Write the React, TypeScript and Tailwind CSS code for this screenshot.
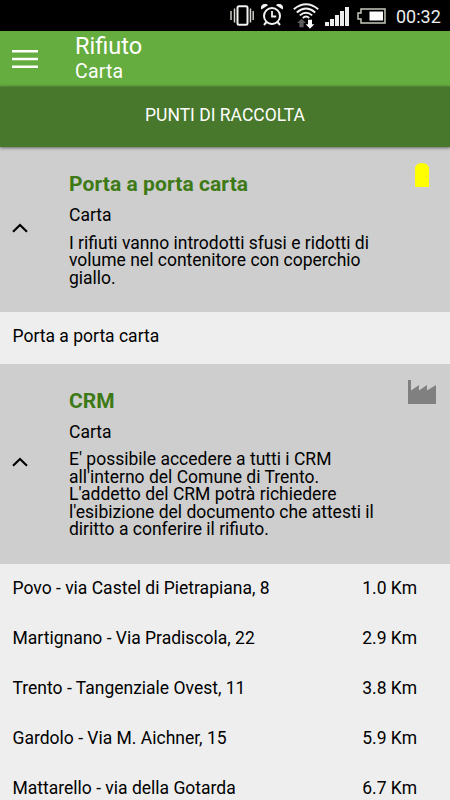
import React from 'react';

interface Place {
  name: string;
  distance?: string;
}

interface Group {
  title: string;
  subtitle: string;
  lines: string[];
  icon: 'bin' | 'factory';
  places: Place[];
}

const groups: Group[] = [
  {
    title: 'Porta a porta carta',
    subtitle: 'Carta',
    lines: ['I rifiuti vanno introdotti sfusi e ridotti di', 'volume nel contenitore con coperchio', 'giallo.'],
    icon: 'bin',
    places: [{ name: 'Porta a porta carta' }],
  },
  {
    title: 'CRM',
    subtitle: 'Carta',
    lines: [
      "E' possibile accedere a tutti i CRM",
      "all'interno del Comune di Trento.",
      "L'addetto del CRM potrà richiedere",
      "l'esibizione del documento che attesti il",
      'diritto a conferire il rifiuto.',
    ],
    icon: 'factory',
    places: [
      { name: 'Povo - via Castel di Pietrapiana, 8', distance: '1.0 Km' },
      { name: 'Martignano - Via Pradiscola, 22', distance: '2.9 Km' },
      { name: 'Trento - Tangenziale Ovest, 11', distance: '3.8 Km' },
      { name: 'Gardolo - Via M. Aichner, 15', distance: '5.9 Km' },
      { name: 'Mattarello - via della Gotarda', distance: '6.7 Km' },
    ],
  },
];

// --- Icons ---

const VibrateIcon = () => (
  <svg width="24" height="22" viewBox="0 0 24 22" fill="none" stroke="#d8d8d0">
    <rect x="7.500" y="1.200" width="10" height="18.600" rx="1.500" strokeWidth="2" stroke="#f2f2f2" />
    <path d="M4.500 3.500v14M20.500 3.500v14" strokeWidth="1.500" />
    <path d="M1 6v9M23.200 6v9" strokeWidth="1.400" />
  </svg>
);

const AlarmIcon = () => (
  <svg width="22" height="22" viewBox="0 0 22 22" fill="none" stroke="#f2f2f2">
    <circle cx="11" cy="12" r="8" strokeWidth="2" />
    <path d="M11 7v5.500h4.200" strokeWidth="1.800" />
    <path d="M5.500 18l-2.500 3M16.500 18l2.500 3" strokeWidth="2" />
    <path d="M.4 5.600A4 4 0 0 1 7 1.200zM21.600 5.600A4 4 0 0 0 15 1.200z" fill="#f2f2f2" stroke="none" />
  </svg>
);

const WifiIcon = () => (
  <svg width="26" height="26" viewBox="0 0 26 26" fill="none">
    <path
      d="M.8 6.200Q13-3.600 25.200 6.200M3.800 9.400Q13 1.800 22.200 9.400M6.800 12.400Q13 7 19.200 12.400M9.800 15Q13 12.200 16.200 15"
      stroke="#f2f2f2"
      strokeWidth="1.900"
    />
    <path d="M8.500 15.700l4.500 4.300h-2.400v4.300H6.400V20H4z" fill="#5c5c5c" />
    <path d="M17 25.700l-4.300-4.500H15v-4.500h4v4.500h2.300z" fill="#fff" />
  </svg>
);

const SignalIcon = () => (
  <svg width="24" height="20" viewBox="0 0 24 20" fill="#ececec">
    <path d="M0 15h4v4H0zM5 12h4v7H5zM10 8h4v11h-4zM15 4h4v15h-4zM20 0h4v19h-4z" />
  </svg>
);

const BatteryIcon = () => (
  <svg width="29" height="16" viewBox="0 0 29 16">
    <path d="M4 1h24v14H4v-4H1V5h3z" fill="none" stroke="#c9c9bf" strokeWidth="1.500" />
    <path d="M12.500 3.500H26v9H12.500z" fill="#fff" />
  </svg>
);

const BinIcon = () => (
  <svg width="14" height="24" viewBox="0 0 14 24">
    <path d="M0 24V6.500Q0 0 7 0t7 6.500V24z" fill="#ff0" />
    <circle cx="11.500" cy="13.400" r=".6" fill="#d0d070" />
  </svg>
);

const FactoryIcon = () => (
  <svg width="28" height="24" viewBox="0 0 28 24">
    <path d="M0 0h3v10.500L11 5v5.500L19 5v5.500L28 5v19H0z" fill="#808080" />
  </svg>
);

const ChevronUp = () => (
  <svg width="16" height="10" viewBox="0 0 16 10" fill="none" stroke="#000" strokeWidth="2.200">
    <path d="M1 8.700L8 2l7 6.700" />
  </svg>
);

const MenuIcon = () => (
  <svg width="26" height="18" viewBox="0 0 26 18" fill="#fff">
    <path d="M0 0h26v2.600H0zM0 7.700h26v2.600H0zM0 15.400h26V18H0z" />
  </svg>
);

// --- Sections ---

const StatusBar = () => (
  <div className="flex h-[31px] shrink-0 items-start bg-black pl-[230px] text-white">
    <div className="pt-[5px]"><VibrateIcon /></div>
    <div className="ml-[7px] pt-1"><AlarmIcon /></div>
    <div className="ml-[10px] pt-[3px]"><WifiIcon /></div>
    <div className="ml-[6px] pt-[7px]"><SignalIcon /></div>
    <div className="ml-2 pt-2"><BatteryIcon /></div>
    <span className="ml-[10px] pt-[6px] text-[18px] leading-[21px] text-[#ececec]">00:32</span>
  </div>
);

const Toolbar = () => (
  <header className="flex h-[55px] shrink-0 bg-[#65ad3e] text-white">
    <button aria-label="Menu" className="ml-3 mt-[19px] h-[18px] w-[26px]">
      <MenuIcon />
    </button>
    <div className="ml-[37px] pt-[2px]">
      <h1 className="text-[23.5px] leading-[27px]">Rifiuto</h1>
      <p className="text-[19.5px] leading-6 tracking-[0.2px]">Carta</p>
    </div>
  </header>
);

const GroupHeader = ({ group }: { group: Group }) => (
  <div className="flex bg-[#cecece] pb-[25px]">
    <div className="flex w-[69px] shrink-0 items-center pl-3 pt-[22px]">
      <ChevronUp />
    </div>
    <div className="flex-1 whitespace-nowrap pt-[24px]">
      <h2 className="text-[21px] font-bold leading-[26px] tracking-[0.08px] text-[#3d7a16]">{group.title}</h2>
      <p className="mt-[8px] text-[17.5px] leading-[20px]">{group.subtitle}</p>
      <p className="mt-[9.5px] text-[17.5px] leading-[17.5px]">
        {group.lines.map((line) => (
          <span key={line} className="block">{line}</span>
        ))}
      </p>
    </div>
    <div className="flex w-14 shrink-0 justify-center pt-[16px]">
      {group.icon === 'bin' ? <BinIcon /> : <FactoryIcon />}
    </div>
  </div>
);

const PlaceRow = ({ place }: { place: Place }) => (
  <li className="flex h-[50px] items-center justify-between pb-px pl-[12.5px] pr-[33px] text-[17.5px]">
    <span>{place.name}</span>
    {place.distance && <span>{place.distance}</span>}
  </li>
);

export default function App() {
  return (
    <div className="flex h-[800px] w-[450px] flex-col overflow-hidden bg-[#eee] font-[Roboto,sans-serif] text-black">
      <StatusBar />
      <Toolbar />
      <button className="z-10 h-[61px] shrink-0 border-t border-[#508535] bg-[#47782b] pb-[3px] text-[17.5px] text-white shadow-[0_1px_3px_rgba(0,0,0,0.5)]">
        PUNTI DI RACCOLTA
      </button>
      <main>
        {groups.map((group) => (
          <section key={group.title}>
            <GroupHeader group={group} />
            <ul className="pb-[1.5px]">
              {group.places.map((place) => (
                <PlaceRow key={place.name} place={place} />
              ))}
            </ul>
          </section>
        ))}
      </main>
    </div>
  );
}
